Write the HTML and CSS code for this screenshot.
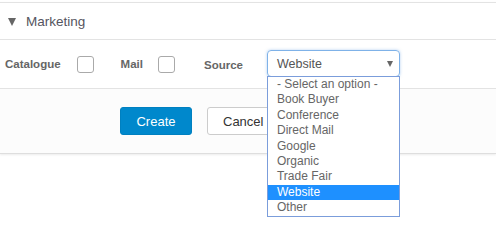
FILE: index.html
```html
<!DOCTYPE html>
<html lang="en">
<head>
    <meta charset="UTF-8">
    <meta name="viewport" content="width=device-width, initial-scale=1.0">
    <title>Marketing</title>
    <link rel="stylesheet" href="styles.css">
</head>
<body>

<div class="panel">
    <div class="panel-heading">
        <span class="caret"></span>
        <span class="title">Marketing</span>
    </div>
    <div class="panel-body">
        <div class="field field-catalogue">
            <label>Catalogue</label>
            <span class="checkbox"></span>
        </div>
        <div class="field field-mail">
            <label>Mail</label>
            <span class="checkbox"></span>
        </div>
        <div class="field field-source">
            <label>Source</label>
            <div class="select-wrap">
                <div class="select">
                    <span>Website</span>
                    <span class="arrow"></span>
                </div>
                <ul class="options">
                    <li>- Select an option -</li>
                    <li>Book Buyer</li>
                    <li>Conference</li>
                    <li>Direct Mail</li>
                    <li>Google</li>
                    <li>Organic</li>
                    <li>Trade Fair</li>
                    <li class="selected">Website</li>
                    <li>Other</li>
                </ul>
            </div>
        </div>
    </div>
    <div class="panel-footer">
        <button class="btn btn-primary">Create</button>
        <button class="btn btn-default">Cancel</button>
    </div>
</div>

</body>
</html>
```

FILE: styles.css
```css
html, body {
    min-height: 243px;
}
body {
    margin: 0;
    font-family: "Liberation Sans", Arial, sans-serif;
    background: #fff;
}
.panel {
    margin-top: 2px;
    border-top: 1px solid #e3e3e3;
    border-bottom: 1px solid #dedede;
    box-shadow: 0 1px 2px rgba(0, 0, 0, 0.08);
}
.panel-heading {
    height: 36px;
    display: flex;
    align-items: center;
    padding-left: 8px;
    border-bottom: 1px solid #e3e3e3;
}
.caret {
    width: 0;
    height: 0;
    border-left: 4.5px solid transparent;
    border-right: 4.5px solid transparent;
    border-top: 8px solid #666;
    margin-right: 10px;
    margin-top: 1px;
}
.title {
    font-size: 13.5px;
    color: #555560;
}
.panel-body {
    height: 48px;
    display: flex;
    align-items: center;
    padding-left: 5px;
    border-bottom: 1px solid #e3e3e3;
}
.field {
    display: flex;
    align-items: center;
}
.field label {
    font-size: 11.5px;
    font-weight: bold;
    color: #666;
}
.field-catalogue {
    gap: 16px;
    margin-right: 27px;
}
.field-mail {
    gap: 15px;
    margin-right: 29px;
}
.field-source {
    gap: 24px;
    margin-top: 2px;
}
.checkbox {
    width: 15px;
    height: 15px;
    border: 1px solid #aaa;
    border-radius: 3px;
    background: #fff;
}
.select-wrap {
    position: relative;
    margin-top: -3px;
}
.select {
    width: 116px;
    height: 25px;
    padding: 0 6px 0 9px;
    display: flex;
    align-items: center;
    justify-content: space-between;
    border: 1px solid #7fb2e8;
    border-radius: 4px;
    box-shadow: 0 0 3px rgba(102, 160, 230, 0.5);
    font-size: 12.5px;
    color: #555;
}
.arrow {
    width: 0;
    height: 0;
    border-left: 3.5px solid transparent;
    border-right: 3.5px solid transparent;
    border-top: 6px solid #666;
}
.options {
    position: absolute;
    top: 26px;
    left: 0;
    width: 131px;
    margin: 0;
    padding: 0;
    list-style: none;
    background: #fff;
    border: 1px solid #7b9ddb;
    z-index: 2;
}
.options li {
    height: 15.4px;
    line-height: 15px;
    padding-left: 9px;
    font-size: 12px;
    color: #666;
}
.options li.selected {
    background: #1e90ff;
    color: #fff;
}
.panel-footer {
    height: 64px;
    display: flex;
    align-items: center;
    gap: 15px;
    padding-left: 120px;
    background: #fcfcfc;
}
.btn {
    height: 28px;
    padding: 0 15px;
    font-family: inherit;
    font-size: 13px;
    border-radius: 3px;
    cursor: pointer;
}
.btn-primary {
    width: 72px;
    background: #0088cc;
    color: #fff;
    border: 1px solid #0080c0;
}
.btn-default {
    background: #fff;
    color: #333;
    border: 1px solid #ccc;
}
```
